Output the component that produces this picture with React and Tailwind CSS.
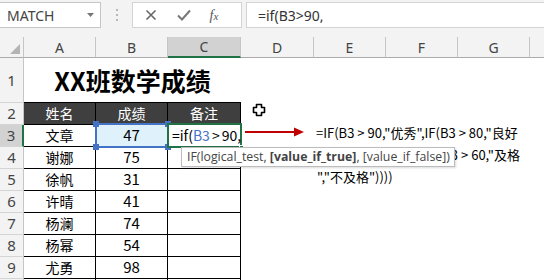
import React from "react";

const FONT = { fontFamily: '"Noto Sans","Noto Sans CJK SC",sans-serif' };
const CJK = { fontFamily: '"Noto Sans CJK SC","Noto Sans",sans-serif' };

const data = [
  ["文章", "47"],
  ["谢娜", "75"],
  ["徐帆", "31"],
  ["许晴", "41"],
  ["杨澜", "74"],
  ["杨幂", "54"],
  ["尤勇", "98"],
];

function RowHead({ n, sel }) {
  return (
    <div
      className={
        sel
          ? "w-[24px] shrink-0 h-full bg-[#d2d2d2] border-r-2 border-r-[#217346] border-b border-b-[#d4d4d4] flex items-center justify-center text-[15px] text-[#444]"
          : "w-[24px] shrink-0 h-full bg-[#f3f3f3] border-r border-r-[#c6c6c6] border-b border-b-[#d4d4d4] flex items-center justify-center text-[15px] text-[#444]"
      }
    >
      {n}
    </div>
  );
}

function ColHead({ label, w, sel }) {
  return (
    <div
      className={
        (sel
          ? "bg-[#d2d2d2] border-b-2 border-b-[#217346] "
          : "bg-[#f3f3f3] border-b border-b-[#ababab] ") +
        w +
        " shrink-0 h-full border-r border-r-[#c6c6c6] flex items-center justify-center text-[14px] text-[#444]"
      }
    >
      {label}
    </div>
  );
}

function Gt() {
  return <span className="px-[3px]">&gt;</span>;
}

export default function App() {
  return (
    <div className="relative w-[544px] h-[280px] overflow-hidden bg-white" style={FONT}>
      {/* toolbar */}
      <div className="h-[37px] bg-[#f3f3f3] flex items-start pt-[2px]">
        <div className="w-[101px] h-[26px] bg-white border border-l-0 border-[#c6c6c6] flex items-center pl-[7px] pr-[6px]">
          <span className="text-[14px] text-[#444] flex-1">MATCH</span>
          <svg width="7" height="4" viewBox="0 0 7 4">
            <path d="M0 0h7L3.5 4z" fill="#777" />
          </svg>
        </div>
        <div className="w-[31px] h-[26px] flex flex-col items-center justify-center gap-[3px]">
          <div className="w-[2px] h-[2px] bg-[#b8b8b8]" />
          <div className="w-[2px] h-[2px] bg-[#b8b8b8]" />
          <div className="w-[2px] h-[2px] bg-[#b8b8b8]" />
        </div>
        <div className="w-[110px] h-[26px] bg-white border border-[#d4d4d4] flex items-center">
          <div className="w-[36px] flex justify-center">
            <svg width="12" height="12" viewBox="0 0 12 12">
              <path d="M1.5 1.5l9 9M10.5 1.5l-9 9" stroke="#666" strokeWidth="1.6" />
            </svg>
          </div>
          <div className="w-[30px] flex justify-center">
            <svg width="14" height="12" viewBox="0 0 14 12">
              <path d="M1 6.5l4 4L13 1.5" stroke="#777" strokeWidth="2" fill="none" />
            </svg>
          </div>
          <div className="w-[30px] flex justify-center">
            <span className="text-[14px] italic text-[#555]" style={{ fontFamily: '"Liberation Serif",serif' }}>
              f<span className="text-[11px]">x</span>
            </span>
          </div>
        </div>
        <div className="flex-1 ml-[4px] h-[26px] bg-white border border-r-0 border-[#d4d4d4] flex items-center pl-[11px] text-[14px] text-[#333]">
          =if(B3&gt;90,
        </div>
      </div>

      {/* column headers */}
      <div className="flex h-[21px]">
        <div className="w-[24px] shrink-0 h-full bg-[#f3f3f3] border-r border-r-[#c6c6c6] border-b border-b-[#ababab] relative">
          <svg className="absolute right-[3px] bottom-[3px]" width="10" height="10" viewBox="0 0 10 10">
            <path d="M10 0V10H0z" fill="#b4b4b4" />
          </svg>
        </div>
        <ColHead label="A" w="w-[72px]" />
        <ColHead label="B" w="w-[72px]" />
        <ColHead label="C" w="w-[73px]" sel />
        <ColHead label="D" w="w-[73px]" />
        <ColHead label="E" w="w-[72px]" />
        <ColHead label="F" w="w-[72px]" />
        <ColHead label="G" w="w-[72px]" />
        <div className="flex-1 h-full bg-[#f3f3f3] border-b border-b-[#ababab]" />
      </div>

      {/* row 1 */}
      <div className="flex h-[45px]">
        <RowHead n="1" />
        <div className="w-[217px] shrink-0 h-full border-b border-black flex items-center justify-center">
          <span className="text-[25px] font-bold text-black leading-none" style={CJK}>
            XX班数学成绩
          </span>
        </div>
        <div className="flex-1" />
      </div>

      {/* row 2 header */}
      <div className="flex h-[22px]">
        <RowHead n="2" />
        {["姓名", "成绩", "备注"].map((t, i) => (
          <div
            key={t}
            className={
              (i === 2 ? "w-[73px] " : "w-[72px] ") +
              "shrink-0 h-full bg-[#3f3f3f] border-r border-b border-black flex items-center justify-center text-[14px] text-white"
            }
            style={CJK}
          >
            {t}
          </div>
        ))}
        <div className="flex-1" />
      </div>

      {/* data rows */}
      {data.map(([name, score], i) => (
        <div key={name} className="flex h-[22px]">
          <RowHead n={String(i + 3)} sel={i === 0} />
          <div className="w-[72px] shrink-0 h-full border-r border-b border-black flex items-center justify-center text-[14px] text-black" style={CJK}>
            {name}
          </div>
          <div
            className={
              i === 0
                ? "w-[72px] shrink-0 h-full bg-[#dff1fb] border-r border-b border-black flex items-center justify-center text-[15px] text-black"
                : "w-[72px] shrink-0 h-full border-r border-b border-black flex items-center justify-center text-[15px] text-black"
            }
            style={CJK}
          >
            {score}
          </div>
          <div className="w-[73px] shrink-0 h-full border-r border-b border-black" />
          <div className="flex-1" />
        </div>
      ))}
      <div className="flex h-[22px]">
        <RowHead n="" />
        <div className="w-[72px] shrink-0 h-full border-r border-black" />
        <div className="w-[72px] shrink-0 h-full border-r border-black" />
        <div className="w-[73px] shrink-0 h-full border-r border-black" />
      </div>

      {/* B3 reference highlight */}
      <div className="absolute left-[95px] top-[123px] w-[74px] h-[25px] border-2 border-[#4472c4]">
        <div className="absolute -left-[4px] -top-[4px] w-[6px] h-[6px] bg-[#4472c4]" />
        <div className="absolute -right-[4px] -top-[4px] w-[6px] h-[6px] bg-[#4472c4]" />
        <div className="absolute -left-[4px] -bottom-[4px] w-[6px] h-[6px] bg-[#4472c4]" />
        <div className="absolute -right-[4px] -bottom-[4px] w-[6px] h-[6px] bg-[#4472c4]" />
      </div>

      {/* C3 active editing cell */}
      <div className="absolute left-[167px] top-[123px] w-[75px] h-[25px] border-2 border-[#217346] bg-white flex items-center pl-[3px] text-[14px] text-black whitespace-nowrap" style={CJK}>
        =if(<span className="text-[#4472c4]">B3</span>
        <span className="inline-block w-px h-[17px] bg-black mx-[1px]" />&gt;
        <span className="inline-block w-px h-[17px] bg-black mx-[1px]" />90,
        <div className="absolute -right-[4px] -bottom-[4px] w-[5px] h-[5px] bg-[#217346] border border-white" />
      </div>

      {/* plus cursor */}
      <svg className="absolute left-[252px] top-[103px]" width="14" height="14" viewBox="0 0 14 14">
        <path d="M4.5 1.5h5v3h3v5h-3v3h-5v-3h-3v-5h3z" fill="white" stroke="black" strokeWidth="1.6" strokeLinejoin="round" />
      </svg>

      {/* red arrow */}
      <svg className="absolute left-[245px] top-[126px]" width="60" height="12" viewBox="0 0 60 12">
        <path d="M0 6H50" stroke="#c00000" strokeWidth="2" />
        <path d="M49 1.5L59 6L49 10.5z" fill="#c00000" />
      </svg>

      {/* formula text box */}
      <div className="absolute left-[316px] top-[122px] w-[204px] text-[13px] leading-[22px] text-black" style={CJK}>
        <div className="whitespace-nowrap">=IF(B3<Gt />90,"优秀",IF(B3<Gt />80,"良好</div>
        <div className="whitespace-nowrap flex justify-end">",IF(B3<Gt />60,"及格</div>
        <div className="whitespace-nowrap pl-[1px]">","不及格"))))</div>
      </div>

      {/* tooltip */}
      <div
        className="absolute left-[181px] top-[147px] h-[20px] w-[274px] bg-white border border-[#bcbcbc] shadow-[1px_1px_2px_rgba(0,0,0,0.15)] flex items-center pl-[5px] pr-[3px] text-[12.3px] text-[#444] whitespace-nowrap"
        style={{ fontFamily: '"Open Sans","Noto Sans",sans-serif' }}
      >
        IF(logical_test,&nbsp;<b className="font-bold">[value_if_true]</b>, [value_if_false])
      </div>
    </div>
  );
}
